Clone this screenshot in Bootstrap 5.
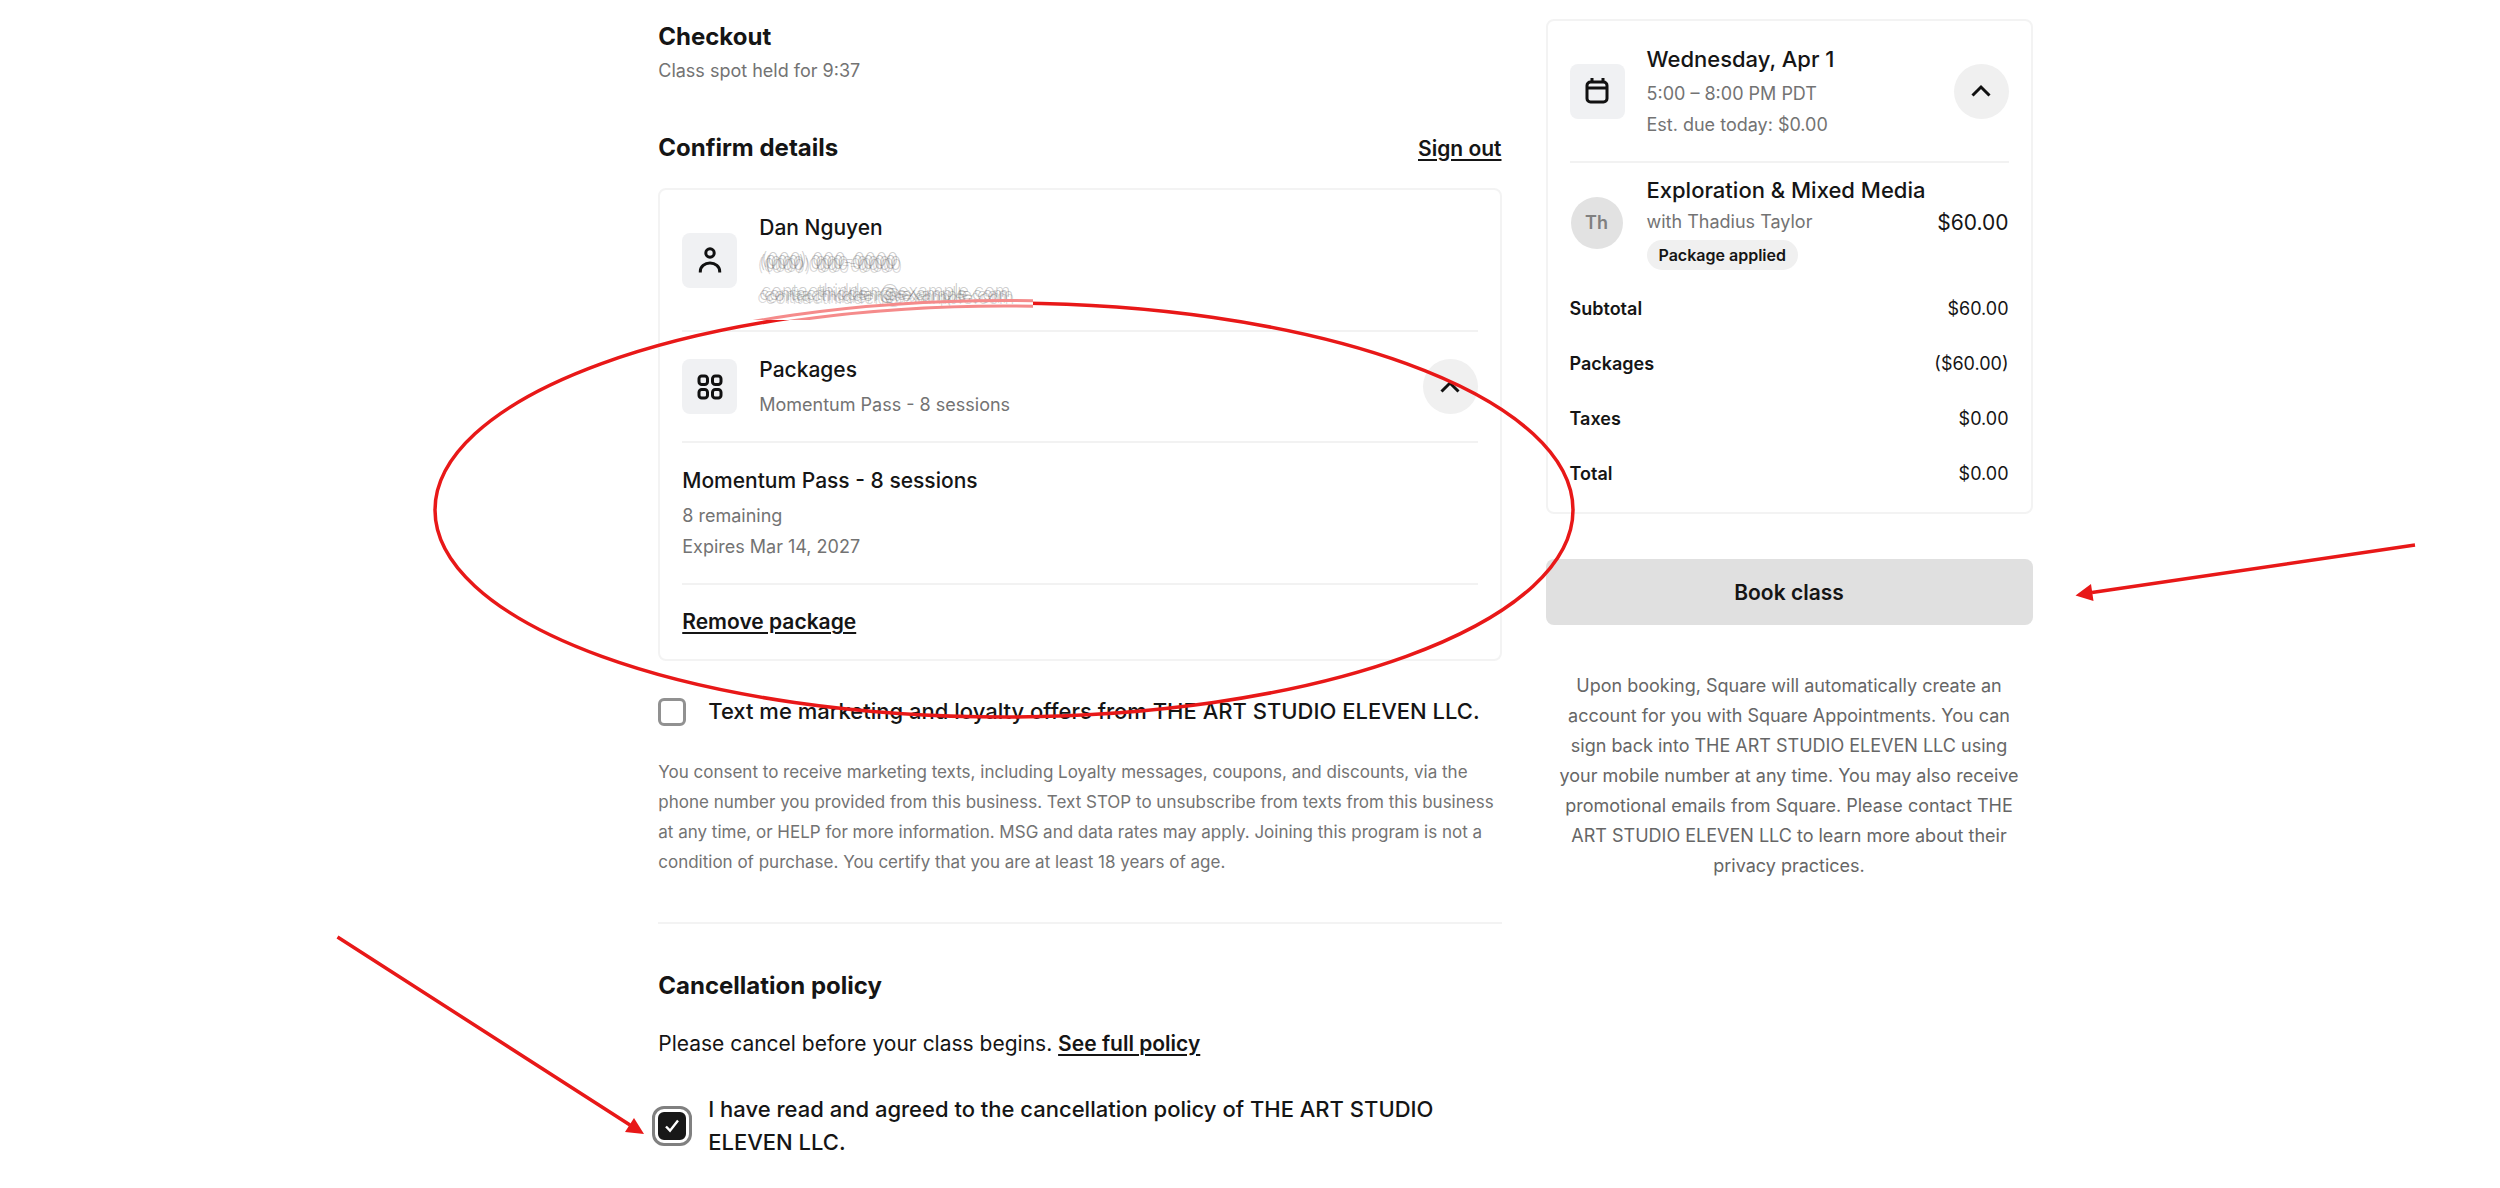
<!DOCTYPE html>
<html lang="en">
<head>
<meta charset="utf-8">
<meta name="viewport" content="width=device-width, initial-scale=1">
<title>Checkout</title>
<link href="https://cdn.jsdelivr.net/npm/bootstrap@5.3.0/dist/css/bootstrap.min.css" rel="stylesheet">
<style>
  body { font-family: Inter, "Liberation Sans", sans-serif; font-size: 18px; line-height: 31px; color: #151515; background: #fff; overflow-x: hidden; }
  .checkout-page { display: grid; grid-template-columns: minmax(0, 1fr) minmax(0, 487px); column-gap: 44px; padding: 18px 18.7% 28px 26.33%; }
  .side-col { padding-top: 1px; }
  .section-title { font-size: 24px; line-height: 38px; font-weight: 700; margin: 0; }
  .muted { color: #737373; }
  .hold-note { line-height: 30px; margin-bottom: 43px; }
  .text-link { font-size: 21px; font-weight: 600; color: #151515; text-decoration: underline; text-decoration-thickness: 2px; text-underline-offset: 3px; }
  .panel { border: 2px solid #f3f3f3; border-radius: 8px; padding: 0 22px; }
  .main-panel { margin-top: 21px; }
  .panel-row { padding: 21px 0; gap: 22px; }
  .panel-row + .panel-row, .item-row { border-top: 2px solid #f2f2f2; }
  .row-title { font-size: 22px; line-height: 34px; font-weight: 500; margin: 0 0 2px; }
  .main-panel .row-title { font-size: 21px; }
  .tile { width: 55px; height: 55px; border-radius: 8px; background: #f0f1f3; }
  .round-btn { width: 55px; height: 55px; border: 0; border-radius: 50%; background: #f0f0f0; padding: 0; }
  .glyph { fill: none; stroke: #111; stroke-width: 3; }
  .smudged { color: rgba(60,60,60,.28); font-weight: 300; text-shadow: 5px 1px rgba(60,60,60,.25), 2px -3px rgba(60,60,60,.25), -2px 3px rgba(60,60,60,.2), 6px 4px rgba(60,60,60,.2); user-select: none; }
  .item-row { padding: 11px 0 10px; }
  .item-row .row-title { line-height: 33px; margin: 0; }
  .item-row .muted { line-height: 30px; margin-bottom: 3px; }
  .avatar { width: 52px; height: 52px; margin: 0 24px 0 1px; border-radius: 50%; background: #e2e2e2; color: #808080; font-weight: 600; }
  .item-price { font-size: 21px; }
  .tag { font-size: 16px; line-height: 30px; font-weight: 600; border-radius: 15px; padding: 0 12px; background: #f0f0f0; color: #151515; }
  .totals { width: 100%; margin-bottom: 11px; }
  .totals th, .totals td { padding: 12px 0; line-height: 31px; }
  .totals th { font-weight: 600; }
  .totals td { text-align: right; }
  .btn-book { width: 100%; height: 66px; margin-top: 45px; border: 0; border-radius: 8px; background: #e0e0e0; color: #151515; font-size: 21px; font-weight: 600; }
  .btn-book:hover { background: #d6d6d6; }
  .legal { line-height: 30px; color: #666; margin: 46px 8px 0; }
  .option { gap: 22px; font-size: 22px; line-height: 33px; font-weight: 500; margin-top: 34px; }
  .option .form-check-input { width: 28px; height: 28px; margin: 0; border: 3px solid #919191; border-radius: 6px; box-shadow: none; }
  .option .form-check-input:checked { background-color: #181818; border-color: #181818; outline: 3px solid #808080; outline-offset: 3px;
    background-size: 22px 22px; background-image: url("data:image/svg+xml,%3csvg xmlns='http://www.w3.org/2000/svg' viewBox='0 0 22 22'%3e%3cpath fill='none' stroke='%23fff' stroke-width='2.4' d='M5 11.5l4 4.2 8-10.2'/%3e%3c/svg%3e"); }
  .consent { font-size: 17px; line-height: 30px; margin: 29px 0 45px; }
  .rule { border: 0; border-top: 2px solid #f3f3f3; opacity: 1; margin: 0 0 43px; }
  .policy-note { font-size: 21px; line-height: 34px; margin: 22px 0 32px; }
  .agree { margin: 0; padding-right: 44px; }
  .markup { position: absolute; left: 0; top: 0; pointer-events: none; }
</style>
<script src="https://cdn.jsdelivr.net/npm/bootstrap@5.3.0/dist/js/bootstrap.bundle.min.js"></script>
</head>
<body class="position-relative">
<main class="checkout-page">
  <div class="main-col">
    <h1 class="section-title">Checkout</h1>
    <p class="hold-note muted">Class spot held for 9:37</p>

    <div class="d-flex justify-content-between align-items-center">
      <h2 class="section-title">Confirm details</h2>
      <a class="text-link" href="#">Sign out</a>
    </div>

    <section class="panel main-panel">
      <div class="panel-row d-flex align-items-center">
        <span class="tile d-flex align-items-center justify-content-center flex-shrink-0">
          <svg class="glyph" width="28" height="28" viewBox="0 0 28 28" aria-hidden="true"><circle cx="14" cy="7" r="4.2"/><path d="M4.300 26.500v-1a9.700 8.500 0 0 1 19.400 0v1"/></svg>
        </span>
        <div>
          <h3 class="row-title">Dan Nguyen</h3>
          <div class="smudged">(000) 000-0000</div>
          <div class="smudged">contacthidden@example.com</div>
        </div>
      </div>
      <div class="panel-row d-flex align-items-center">
        <span class="tile d-flex align-items-center justify-content-center flex-shrink-0">
          <svg class="glyph" width="28" height="28" viewBox="0 0 28 28" aria-hidden="true"><rect x="3" y="3" width="8.500" height="8.500" rx="2.800"/><rect x="16.500" y="3" width="8.500" height="8.500" rx="2.800"/><rect x="3" y="16.500" width="8.500" height="8.500" rx="2.800"/><rect x="16.500" y="16.500" width="8.500" height="8.500" rx="2.800"/></svg>
        </span>
        <div class="flex-grow-1">
          <h3 class="row-title">Packages</h3>
          <div class="muted">Momentum Pass - 8 sessions</div>
        </div>
        <button class="round-btn d-flex align-items-center justify-content-center" type="button" aria-label="Collapse packages">
          <svg class="glyph" width="20" height="14" viewBox="0 0 20 14" aria-hidden="true"><path d="M1.500 11.500L10 3l8.500 8.500"/></svg>
        </button>
      </div>
      <div class="panel-row">
        <h3 class="row-title">Momentum Pass - 8 sessions</h3>
        <div class="muted">8 remaining</div>
        <div class="muted">Expires Mar 14, 2027</div>
      </div>
      <div class="panel-row"><a class="text-link d-inline-block" href="#">Remove package</a></div>
    </section>

    <div class="option d-flex align-items-center">
      <input class="form-check-input flex-shrink-0" type="checkbox" id="texts">
      <label for="texts">Text me marketing and loyalty offers from THE ART STUDIO ELEVEN LLC.</label>
    </div>
    <p class="consent muted">You consent to receive marketing texts, including Loyalty messages, coupons, and discounts, via the phone number you provided from this business. Text STOP to unsubscribe from texts from this business at any time, or HELP for more information. MSG and data rates may apply. Joining this program is not a condition of purchase. You certify that you are at least 18 years of age.</p>
    <hr class="rule">

    <h2 class="section-title">Cancellation policy</h2>
    <p class="policy-note">Please cancel before your class begins. <a class="text-link" href="#">See full policy</a></p>
    <div class="option agree d-flex align-items-center">
      <input class="form-check-input flex-shrink-0" type="checkbox" id="agree" checked>
      <label for="agree">I have read and agreed to the cancellation policy of THE ART STUDIO ELEVEN LLC.</label>
    </div>
  </div>

  <aside class="side-col">
    <section class="panel">
      <div class="panel-row d-flex align-items-center">
        <span class="tile d-flex align-items-center justify-content-center flex-shrink-0">
          <svg class="glyph" width="28" height="28" viewBox="0 0 28 28" aria-hidden="true"><rect x="4" y="5" width="20" height="20" rx="3.500"/><path d="M4 11h20M9 1v4M20 1v4"/></svg>
        </span>
        <div class="flex-grow-1">
          <h2 class="row-title">Wednesday, Apr 1</h2>
          <div class="muted">5:00 – 8:00 PM PDT</div>
          <div class="muted">Est. due today: $0.00</div>
        </div>
        <button class="round-btn d-flex align-items-center justify-content-center" type="button" aria-label="Collapse summary">
          <svg class="glyph" width="20" height="14" viewBox="0 0 20 14" aria-hidden="true"><path d="M1.500 11.500L10 3l8.500 8.500"/></svg>
        </button>
      </div>
      <div class="item-row d-flex align-items-center">
        <span class="avatar d-flex align-items-center justify-content-center flex-shrink-0">Th</span>
        <div class="flex-grow-1 text-nowrap">
          <h3 class="row-title">Exploration &amp; Mixed Media</h3>
          <div class="muted">with Thadius Taylor</div>
          <span class="tag d-inline-block align-top">Package applied</span>
        </div>
        <span class="item-price">$60.00</span>
      </div>
      <table class="totals">
        <tbody>
          <tr><th scope="row">Subtotal</th><td>$60.00</td></tr>
          <tr><th scope="row">Packages</th><td>($60.00)</td></tr>
          <tr><th scope="row">Taxes</th><td>$0.00</td></tr>
          <tr><th scope="row">Total</th><td>$0.00</td></tr>
        </tbody>
      </table>
    </section>
    <button class="btn-book" type="button">Book class</button>
    <p class="legal text-center">Upon booking, Square will automatically create an account for you with Square Appointments. You can sign back into THE ART STUDIO ELEVEN LLC using your mobile number at any time. You may also receive promotional emails from Square. Please contact THE ART STUDIO ELEVEN LLC to learn more about their privacy practices.</p>
  </aside>
</main>

<!-- Red review marks over the page -->
<svg class="markup" width="2500" height="1180" viewBox="0 0 2500 1180" fill="none" stroke="#e81818" stroke-width="3.500" aria-hidden="true">
  <defs>
    <clipPath id="outside"><path clip-rule="evenodd" d="M0 0H2500V1180H0ZM750 290H1033V320H750Z"/></clipPath>
    <clipPath id="inside"><rect x="750" y="290" width="283" height="30"/></clipPath>
  </defs>
  <ellipse cx="1004" cy="510" rx="569" ry="207" clip-path="url(#outside)"/>
  <g clip-path="url(#inside)" stroke="#f58b8b" stroke-width="3">
    <ellipse cx="1004" cy="507.500" rx="572" ry="207"/>
    <ellipse cx="1004" cy="513" rx="569" ry="207"/>
  </g>
  <path d="M337.500 937L630 1125M2415 545L2092 592.500"/>
  <path fill="#e81818" stroke="none" d="M644 1134L634 1118L625 1132ZM2075.500 595.500L2091 584L2093.500 601Z"/>
</svg>
</body>
</html>
